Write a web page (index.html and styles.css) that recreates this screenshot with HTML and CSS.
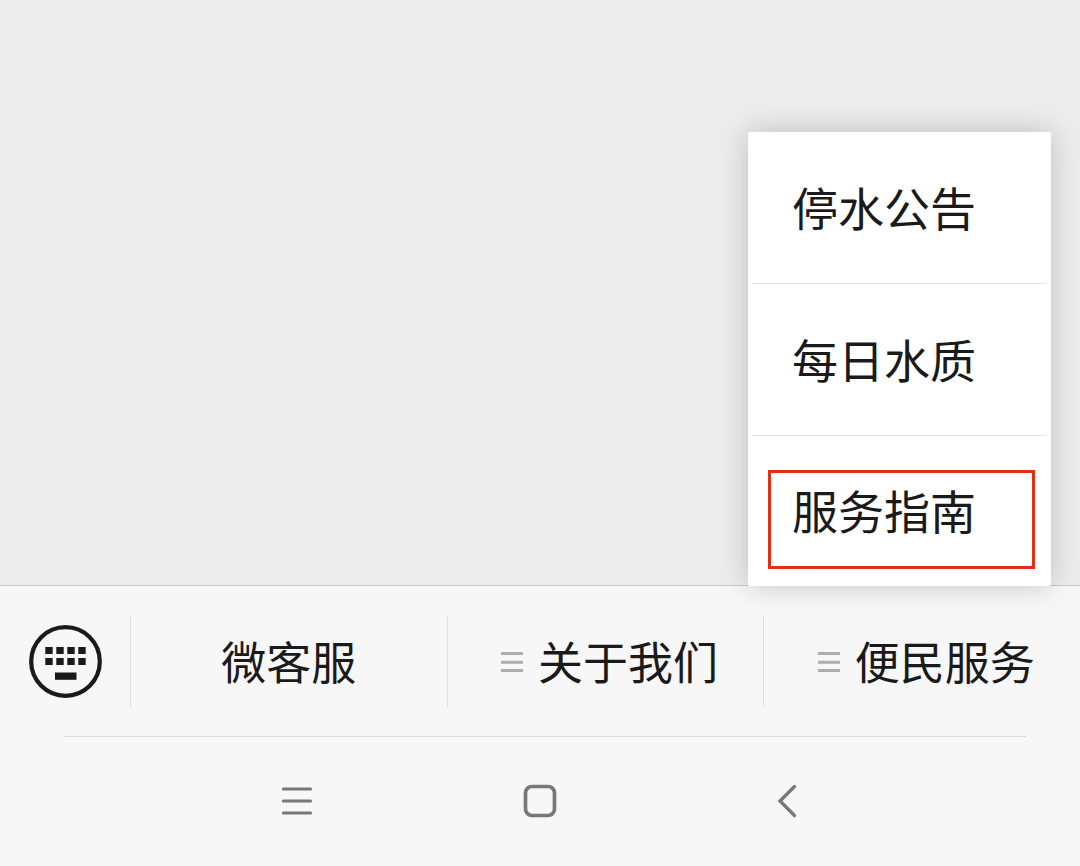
FILE: index.html
```html
<!DOCTYPE html>
<html lang="zh-CN">
<head>
    <meta charset="UTF-8">
    <meta name="viewport" content="width=device-width, initial-scale=1.0">
    <title>便民服务</title>
    <link rel="stylesheet" href="styles.css">
</head>
<body>

    <main class="chat"></main>

    <footer class="toolbar">
        <button type="button" class="keyboard-btn" aria-label="键盘">
            <svg width="74" height="74" viewBox="0 0 74 74">
                <circle cx="37.500" cy="37.500" r="34.3" fill="none" stroke="#1a1a1a" stroke-width="4.200"/>
                <g fill="#1a1a1a">
                    <path d="M17.300 23h7.400v7h-7.400zM28.300 23h7.400v7h-7.400zM39.300 23h7.400v7h-7.400zM50.300 23h7.400v7h-7.400z"/>
                    <path d="M17.300 34h7.400v7h-7.400zM28.300 34h7.400v7h-7.400zM39.300 34h7.400v7h-7.400zM50.300 34h7.400v7h-7.400z"/>
                    <path d="M27 48.500h21.500v7.300h-21.500z"/>
                </g>
            </svg>
        </button>

        <nav class="tabs">
            <div class="tab">
                <button type="button" class="tab-btn">微客服</button>
            </div>
            <div class="tab">
                <button type="button" class="tab-btn has-menu">
                    <svg width="22" height="22" viewBox="0 0 22 22">
                        <path d="M0 3.500h22M0 12.200h22M0 20.500h22" stroke="#adadad" stroke-width="3"/>
                    </svg>
                    关于我们
                </button>
            </div>
            <div class="tab">
                <button type="button" class="tab-btn has-menu" aria-expanded="true">
                    <svg width="22" height="22" viewBox="0 0 22 22">
                        <path d="M0 3.500h22M0 12.200h22M0 20.500h22" stroke="#adadad" stroke-width="3"/>
                    </svg>
                    便民服务
                </button>
                <div class="menu">
                    <button type="button" class="menu-item">停水公告</button>
                    <button type="button" class="menu-item">每日水质</button>
                    <button type="button" class="menu-item marked">服务指南</button>
                </div>
            </div>
        </nav>
    </footer>

    <hr class="divider">

    <nav class="system-nav">
        <button type="button" class="system-btn" aria-label="最近任务">
            <svg width="34" height="34" viewBox="0 0 34 34">
                <path d="M3.500 5h27M3.500 17h27M3.500 29h27" stroke="#787878" stroke-width="3.200" stroke-linecap="round"/>
            </svg>
        </button>
        <button type="button" class="system-btn" aria-label="主页">
            <svg width="34" height="34" viewBox="0 0 34 34">
                <rect x="2.500" y="2.500" width="29" height="29" rx="6.500" fill="none" stroke="#787878" stroke-width="3.700"/>
            </svg>
        </button>
        <button type="button" class="system-btn" aria-label="返回">
            <svg width="34" height="34" viewBox="0 0 34 34">
                <path d="M28.500 2.500L14 17l14.500 14.500" fill="none" stroke="#787878" stroke-width="3.300" stroke-linecap="round"/>
            </svg>
        </button>
    </nav>

</body>
</html>
```

FILE: styles.css
```css
* {
    box-sizing: border-box;
}

body {
    margin: 0;
    min-height: 100vh;
    display: flex;
    flex-direction: column;
    background: #f7f7f7;
    color: #1a1a1a;
    font-family: "Noto Sans CJK SC", sans-serif;
}

button {
    margin: 0;
    padding: 0;
    border: none;
    background: none;
    color: inherit;
    font-family: inherit;
    cursor: pointer;
}

svg {
    display: block;
    flex: none;
}

.chat {
    flex: 1;
    background: #ececec;
}

/* Bottom toolbar */
.toolbar {
    display: flex;
    height: 151px;
    border-top: 1px solid #c8c8c8;
}

.keyboard-btn {
    width: 130px;
    display: flex;
    align-items: center;
    justify-content: center;
}

.tabs {
    flex: 1;
    display: flex;
}

.tab {
    flex: 1;
    position: relative;
    display: flex;
    align-items: center;
}

.tab-btn {
    flex: 1;
    height: 92px;
    display: flex;
    align-items: center;
    justify-content: center;
    gap: 15px;
    border-left: 1px solid #e0e0e0;
    font-size: 45px;
    line-height: 60px;
    white-space: nowrap;
}

.has-menu {
    padding-left: 8px;
}

/* Popup menu above the tab */
.menu {
    position: absolute;
    right: 29px;
    bottom: 100%;
    width: 303px;
    padding: 0 4px;
    background: #fff;
    border-radius: 2px;
    box-shadow: 0 0 28px rgba(0, 0, 0, 0.2);
}

.menu-item {
    display: block;
    position: relative;
    width: 100%;
    height: 152px;
    padding: 0 40px 4px;
    border-bottom: 1px solid #e4e4e4;
    font-size: 46px;
    line-height: 60px;
    text-align: left;
}

.menu-item:last-child {
    height: 150px;
    border-bottom: none;
}

.marked::after {
    content: "";
    position: absolute;
    top: 34px;
    right: 12px;
    bottom: 17px;
    left: 16px;
    border: 3px solid #e03018;
}

/* Phone navigation keys */
.divider {
    height: 1px;
    margin: 0 54px 0 64px;
    border: none;
    background: #dcdcdc;
}

.system-nav {
    display: flex;
    justify-content: center;
    gap: 209px;
    height: 129px;
    padding-bottom: 2px;
}

.system-btn {
    display: flex;
    align-items: center;
}
```
